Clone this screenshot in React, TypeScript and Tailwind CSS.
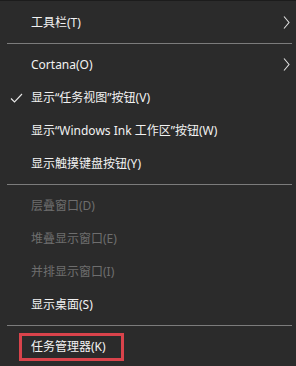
const font = {
  fontFamily: '"Noto Sans", "Noto Sans CJK SC", sans-serif',
};

type Item =
  | { kind: "sep" }
  | { kind: "item"; label: string; disabled?: boolean; checked?: boolean; sub?: boolean; boxed?: boolean };

const items: Item[] = [
  { kind: "item", label: "工具栏(T)", sub: true },
  { kind: "sep" },
  { kind: "item", label: "Cortana(O)", sub: true },
  { kind: "item", label: "显示“任务视图”按钮(V)", checked: true },
  { kind: "item", label: "显示“Windows Ink 工作区”按钮(W)" },
  { kind: "item", label: "显示触摸键盘按钮(Y)" },
  { kind: "sep" },
  { kind: "item", label: "层叠窗口(D)", disabled: true },
  { kind: "item", label: "堆叠显示窗口(E)", disabled: true },
  { kind: "item", label: "并排显示窗口(I)", disabled: true },
  { kind: "item", label: "显示桌面(S)" },
  { kind: "sep" },
  { kind: "item", label: "任务管理器(K)", boxed: true },
];

function Check() {
  return (
    <svg width="13" height="10" viewBox="0 0 13 10" className="absolute left-[10px] top-[12px]">
      <path d="M1 5.5 L4.5 9 L12 1" fill="none" stroke="#e8e8e8" strokeWidth="1.1" />
    </svg>
  );
}

function Chevron() {
  return (
    <svg width="7" height="13" viewBox="0 0 7 13" className="absolute right-[6px] top-[10px]">
      <path d="M1 0.5 L6 6.5 L1 12.5" fill="none" stroke="#e0e0e0" strokeWidth="1.1" />
    </svg>
  );
}

export default function App() {
  return (
    <div className="h-[366px] w-[296px] overflow-hidden border-t border-[#1c1c1c] bg-[#2b2b2b] pt-[5px]" style={font}>
      {items.map((it, i) =>
        it.kind === "sep" ? (
          <div key={i} className="flex h-[9px] items-center pl-[7px] pr-[4px]">
            <div className="h-px w-full bg-[#7c7c7c]" />
          </div>
        ) : (
          <div
            key={i}
            className={
              "relative flex h-[33px] items-center pl-[31px] text-[12px] " +
              (it.disabled ? "text-[#6e6e6e]" : "text-[#f2f2f2]")
            }
          >
            {it.checked && <Check />}
            <span>{it.label}</span>
            {it.sub && <Chevron />}
            {it.boxed && (
              <div className="absolute left-[19px] top-[3px] h-[28px] w-[105px] border-[3px] border-[#d9434b]" />
            )}
          </div>
        )
      )}
    </div>
  );
}
